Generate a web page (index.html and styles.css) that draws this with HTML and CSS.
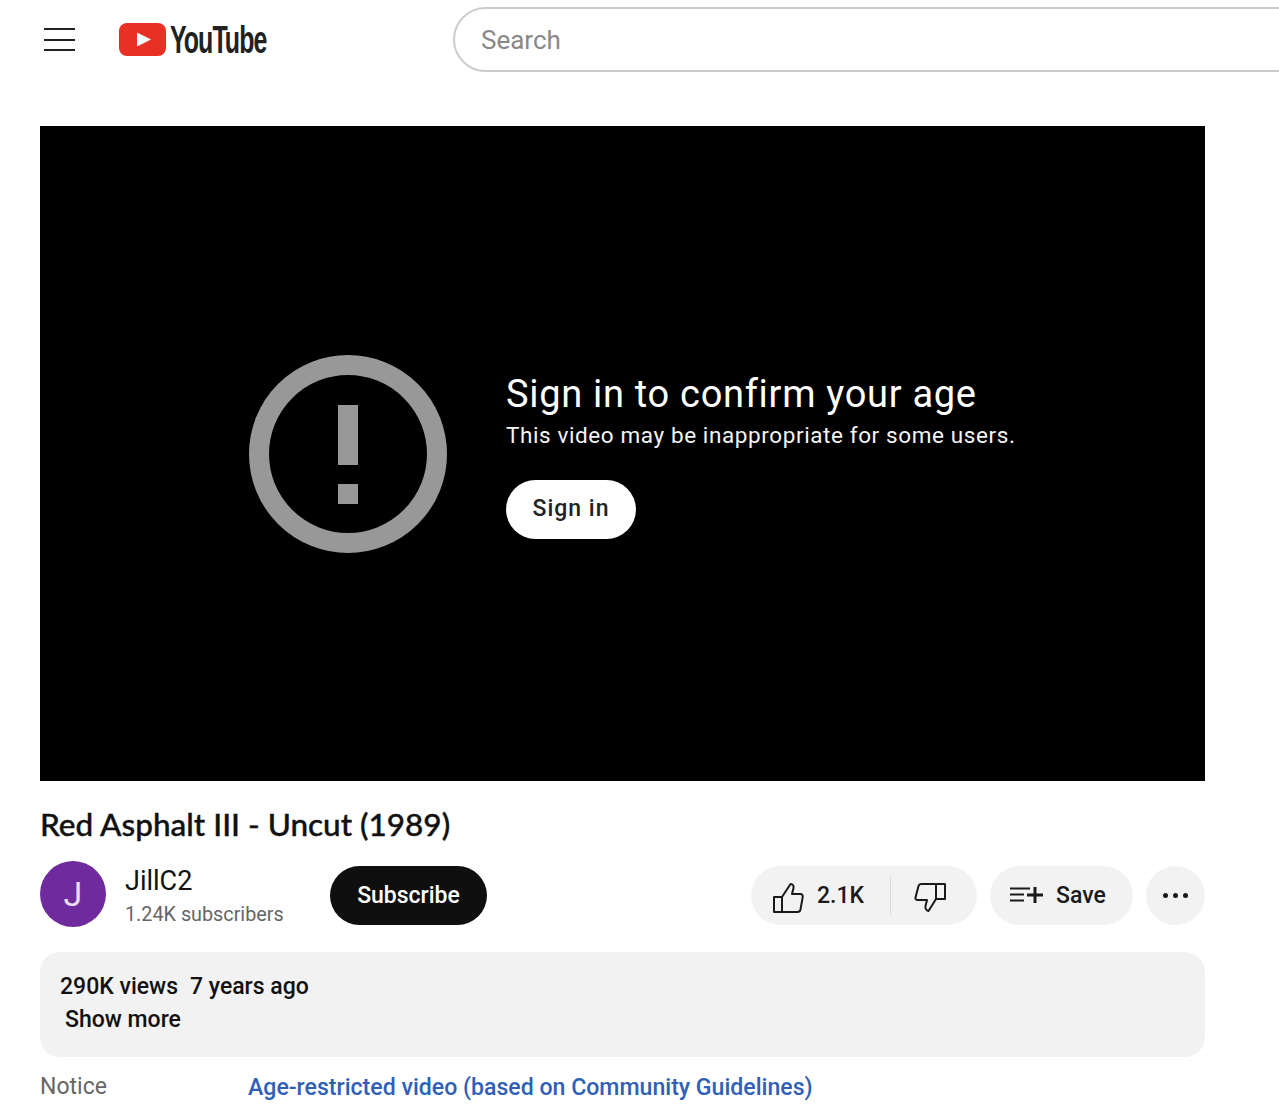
FILE: index.html
```html
<!DOCTYPE html>
<html lang="en">
<head>
<meta charset="utf-8">
<title>Red Asphalt III - Uncut (1989)</title>
<link rel="stylesheet" href="styles.css">
</head>
<body>
<header class="topbar">
  <div class="menu"><span></span><span></span><span></span></div>
  <div class="logo">
    <svg class="logo-mark" viewBox="0 0 47 33" width="47" height="33"><rect width="47" height="33" rx="8" fill="#e93025"/><path d="M18 9.500 32 16.500 18 23.500Z" fill="#fff"/></svg>
    <span class="wordmark-box"><span class="wordmark">YouTube</span></span>
  </div>
  <div class="search">Search</div>
</header>
<main class="page">
  <section class="player">
    <svg class="alert" viewBox="0 0 198 198" width="198" height="198"><circle cx="99" cy="99" r="89" fill="none" stroke="#989898" stroke-width="20"/><rect x="89" y="50" width="20" height="60" fill="#989898"/><rect x="89" y="129" width="20" height="20" fill="#989898"/></svg>
    <div class="gate">
      <h2>Sign in to confirm your age</h2>
      <p>This video may be inappropriate for some users.</p>
      <button class="signin">Sign in</button>
    </div>
  </section>
  <h1 class="title">Red Asphalt III - Uncut (1989)</h1>
  <div class="meta">
    <div class="avatar">J</div>
    <div class="channel">
      <div class="name">JillC2</div>
      <div class="subs">1.24K subscribers</div>
    </div>
    <button class="subscribe">Subscribe</button>
    <div class="actions">
      <div class="pill likes">
        <div class="like">
          <svg class="thumb" viewBox="0 0 32 32" width="32" height="32" fill="none" stroke="#1a1a1a" stroke-width="2" stroke-linejoin="round"><path d="M2 15h8v15H2z"/><path d="M10 15 18.500 2c2.500 0 3.500 2 3 4l-1.500 6h8.500c1.500 0 2.500 1.500 2.200 3l-2.200 12.500c-.3 1.500-1.500 2.500-3 2.500H10"/></svg>
          <span>2.1K</span>
        </div>
        <div class="divider"></div>
        <svg class="thumb dislike" viewBox="0 0 32 32" width="32" height="32" fill="none" stroke="#1a1a1a" stroke-width="2" stroke-linejoin="round"><path d="M22 2h9v15h-9z"/><path d="M22 2H7C5.500 2 4.800 3 4.500 4L1.500 15.500C1.200 17 2.200 18 3.500 18H13l-1.500 6c-.5 2.500 1 4.500 3 5l7.500-12"/></svg>
      </div>
      <div class="pill save">
        <svg viewBox="0 0 36 20" width="36" height="20" fill="none" stroke="#1a1a1a"><path d="M1 3.500h20M1 9.500h14M1 15.500h14" stroke-width="1.800"/><path d="M18 10h16M26 2v16" stroke-width="3"/></svg>
        <span>Save</span>
      </div>
      <div class="pill more"><i></i><i></i><i></i></div>
    </div>
  </div>
  <section class="description">
    <div class="stats"><span>290K views</span><span>7 years ago</span></div>
    <div class="showmore">Show more</div>
  </section>
  <div class="notice">
    <span class="notice-label">Notice</span>
    <a class="notice-link" href="#">Age-restricted video (based on Community Guidelines)</a>
  </div>
</main>
</body>
</html>
```
FILE: styles.css
```css
* { box-sizing: border-box; }
html, body { margin: 0; padding: 0; height: 1110px; overflow: hidden; background: #fff; }
body { font-family: Roboto, "Liberation Sans", sans-serif; color: #0f0f0f; }
.topbar { display: flex; align-items: center; height: 79px; padding-left: 44px; overflow: hidden; }
.menu { flex: none; width: 31px; display: flex; flex-direction: column; gap: 8.500px; }
.menu span { display: block; height: 2px; background: #222; }
.logo { flex: none; display: flex; align-items: center; margin-left: 44px; gap: 4px; width: 334px; }
.logo-mark { display: block; flex: none; }
.wordmark-box { display: block; width: 97px; height: 40px; }
.wordmark { display: block; font-family: "Liberation Sans", sans-serif; font-weight: 700; font-size: 39px; line-height: 40px; letter-spacing: -1.500px; color: #212121; transform: scaleX(.64); transform-origin: left center; white-space: nowrap; }
.search { flex: none; width: 900px; height: 65px; border: 2px solid #ccc; border-radius: 33px; padding-left: 26px; display: flex; align-items: center; font-size: 26px; color: #888; }
.page { padding: 47px 74px 0 40px; }
.player { height: 655px; background: #000; display: flex; align-items: flex-start; padding: 229px 0 0 209px; }
.alert { display: block; flex: none; }
.gate { margin-left: 59px; padding-top: 15px; color: #fff; }
.gate h2 { margin: 0; font-size: 38px; font-weight: 400; line-height: 48px; letter-spacing: .7px; white-space: nowrap; }
.gate p { margin: 0; font-size: 22.500px; line-height: 34px; letter-spacing: .6px; color: #f4f4f4; white-space: nowrap; }
.signin { display: block; margin-top: 28px; padding: 0 0 2px; width: 130px; height: 59px; border: 0; border-radius: 30px; background: #fff; color: #222; font: 500 23px Roboto, sans-serif; letter-spacing: 1px; }
.title { margin: 23px 0 0; height: 40px; font: 500 31.500px/40px Lato, sans-serif; -webkit-text-stroke: .4px #111; color: #111; white-space: nowrap; }
.meta { display: flex; align-items: center; height: 66px; margin-top: 17px; }
.avatar { flex: none; width: 66px; height: 66px; border-radius: 50%; background: #6f2a9e; color: #eadcf3; display: flex; align-items: center; justify-content: center; font-size: 34px; }
.channel { margin-left: 19px; width: 205px; padding-top: 4px; }
.name { font-size: 27px; line-height: 34px; font-weight: 400; color: #111; }
.subs { font-size: 19.800px; line-height: 26px; color: #666; margin-top: 4px; }
.subscribe { width: 157px; height: 59px; margin-top: 2px; border: 0; border-radius: 30px; background: #0f0f0f; color: #fff; font: 500 23px Roboto, sans-serif; }
.actions { margin-left: auto; margin-top: 2px; display: flex; gap: 13px; }
.pill { height: 59px; border-radius: 30px; background: #f2f2f2; display: flex; align-items: center; font-size: 23px; font-weight: 500; color: #1a1a1a; }
.likes { width: 226px; padding-left: 21px; }
.like { display: flex; align-items: center; gap: 13px; width: 118px; }
.thumb { margin-top: 6px; }
.divider { width: 1px; height: 40px; background: #dcdcdc; }
.dislike { margin-left: 23px; }
.save { width: 143px; padding-left: 19px; gap: 11px; }
.more { width: 59px; justify-content: center; gap: 5px; }
.more i { display: block; width: 5px; height: 5px; border-radius: 50%; background: #1a1a1a; }
.description { margin-top: 25px; height: 105px; border-radius: 20px; background: #f2f2f2; padding: 18px 20px 0; font-size: 23px; line-height: 33px; font-weight: 500; color: #111; }
.stats { display: flex; gap: 12px; }
.showmore { padding-left: 5px; }
.notice { display: flex; align-items: center; margin-top: 11px; height: 36px; }
.notice-label { width: 208px; font-size: 23px; color: #666; }
.notice-link { font-size: 23.100px; font-weight: 500; color: #2f60b8; text-decoration: none; white-space: nowrap; margin-top: 2px; }
```
